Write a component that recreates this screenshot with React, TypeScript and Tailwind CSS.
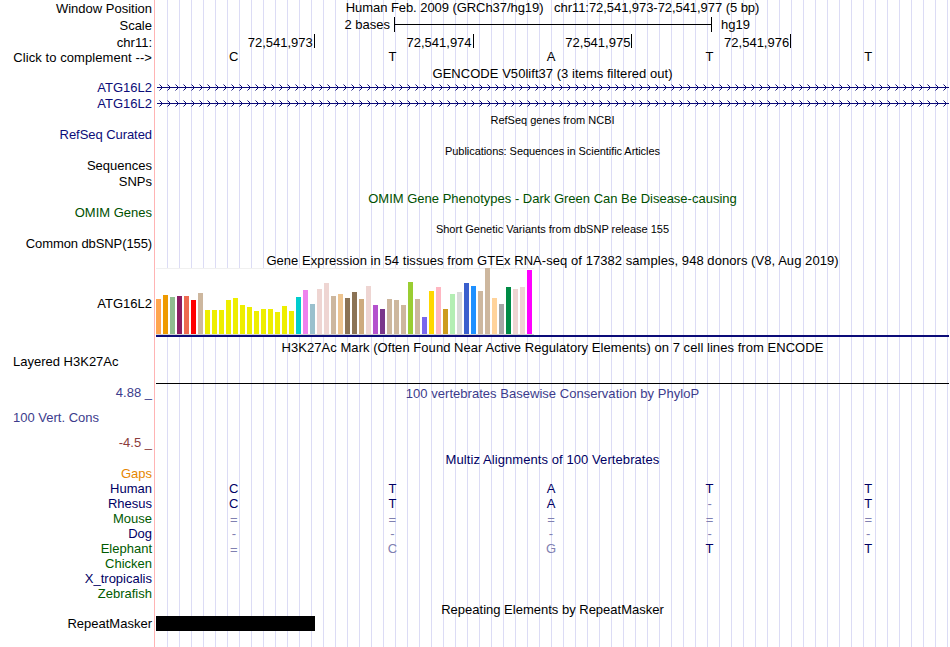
import clsx from "clsx";

const BASES = ["C", "T", "A", "T", "T"];
const POSITIONS = ["72,541,973", "72,541,974", "72,541,975", "72,541,976"];

const GUIDES = Array.from({ length: 66 }, (_, i) => 167 + i * 12);
const CHEVRONS = Array.from({ length: 99 }, (_, i) => 3 + i * 8);

// median expression per tissue, in pixels
const TISSUES: [number, string][] = [
  [35, "#ffa54f"],
  [39, "#ee9a00"],
  [37, "#8fbc8f"],
  [38, "#8b1c62"],
  [38, "#ee6a50"],
  [34, "#ff0000"],
  [41, "#cdb79e"],
  [24, "#eeee00"],
  [24, "#eeee00"],
  [24, "#eeee00"],
  [34, "#eeee00"],
  [36, "#eeee00"],
  [29, "#eeee00"],
  [27, "#eeee00"],
  [23, "#eeee00"],
  [25, "#eeee00"],
  [25, "#eeee00"],
  [22, "#eeee00"],
  [28, "#eeee00"],
  [23, "#eeee00"],
  [37, "#00cdcd"],
  [44, "#ee82ee"],
  [30, "#9ac0cd"],
  [45, "#eed5d2"],
  [51, "#eed5d2"],
  [38, "#cdb79e"],
  [40, "#eec591"],
  [36, "#8b7355"],
  [42, "#8b7355"],
  [35, "#cdaa7d"],
  [48, "#eed5d2"],
  [29, "#b452cd"],
  [25, "#7a378b"],
  [35, "#cdb79e"],
  [34, "#cdb79e"],
  [29, "#cdb79e"],
  [52, "#9acd32"],
  [35, "#cdb79e"],
  [17, "#7a67ee"],
  [43, "#ffd700"],
  [47, "#ffb6c1"],
  [25, "#cd9b1d"],
  [40, "#b4eeb4"],
  [42, "#d9d9d9"],
  [51, "#3a5fcd"],
  [48, "#1e90ff"],
  [43, "#cdb79e"],
  [66, "#cdb79e"],
  [36, "#ffd39b"],
  [30, "#a6a6a6"],
  [47, "#008b45"],
  [45, "#eed5d2"],
  [47, "#eed5d2"],
  [64, "#ff00ff"],
];

const SPECIES = [
  { name: "Gaps", color: "text-[#e68600]", bases: "" },
  { name: "Human", color: "text-[#000064]", bases: "CTATT" },
  { name: "Rhesus", color: "text-[#000064]", bases: "CTA-T" },
  { name: "Mouse", color: "text-[#005a00]", bases: "=====" },
  { name: "Dog", color: "text-[#000064]", bases: "-----" },
  { name: "Elephant", color: "text-[#005a00]", bases: "=CGTT" },
  { name: "Chicken", color: "text-[#005a00]", bases: "" },
  { name: "X_tropicalis", color: "text-[#000064]", bases: "" },
  { name: "Zebrafish", color: "text-[#005a00]", bases: "" },
];

interface RowProps {
  label?: string;
  height?: string;
  color?: string;
  align?: string;
  labelClass?: string;
  children?: React.ReactNode;
}

function Row({ label, height = "h-[15px]", color, align = "pr-1 text-right", labelClass, children }: RowProps) {
  return (
    <div className={clsx("flex", height, color)}>
      <div className={clsx("w-[156px] shrink-0", align, labelClass)}>{label}</div>
      <div className="w-[793px]">{children}</div>
    </div>
  );
}

interface TitleProps {
  text: string;
  height?: string;
  color?: string;
  className?: string;
}

function Title({ text, height, color, className }: TitleProps) {
  return (
    <Row height={height} color={color}>
      <p className={clsx("text-center", className)}>{text}</p>
    </Row>
  );
}

function Transcript() {
  return (
    <Row label="ATG16L2" height="h-[16px]" color="text-[#0c0c78]">
      <svg width="793" height="16" shapeRendering="crispEdges" fill="#0c0c78">
        <rect x="1" y="7" width="792" height="1" />
        {CHEVRONS.map((x) => (
          <g key={x}>
            <path d={`M${x} 4h1v1h-1zM${x} 10h1v1h-1z`} opacity="0.5" />
            <path d={`M${x + 1} 5h1v1h-1zM${x + 2} 6h1v1h-1zM${x + 2} 8h1v1h-1zM${x + 1} 9h1v1h-1z`} />
          </g>
        ))}
      </svg>
    </Row>
  );
}

// mismatches against the reference base are drawn lighter
function BaseCells({ bases, reference }: { bases: string[]; reference?: string[] }) {
  return (
    <div className="grid grid-cols-5">
      {bases.map((base, i) => (
        <span key={i} className={clsx("-ml-[3px] text-center", reference && base !== reference[i] && "text-[#8080b1]", base === "=" && "pt-px")}>
          {base}
        </span>
      ))}
    </div>
  );
}

export default function App() {
  return (
    <div className="relative h-[647px] w-[950px] overflow-hidden bg-white font-['Liberation_Sans',Arial,sans-serif] text-[13px] leading-[15px] whitespace-pre text-black">
      <svg className="absolute inset-0" width="950" height="647" shapeRendering="crispEdges">
        <rect x="154" width="1" height="647" fill="#ffb4b4" />
        {GUIDES.map((x) => (
          <rect key={x} x={x} width="1" height="647" fill="#dcdcf5" />
        ))}
      </svg>

      <div className="relative">
        <Row label="Window Position" height="h-[17px]" labelClass="pt-px">
          <p className="text-center tracking-[-0.06px]">Human Feb. 2009 (GRCh37/hg19)   chr11:72,541,973-72,541,977 (5 bp)</p>
        </Row>
        <Row label="Scale" height="h-[18px]" labelClass="pt-px">
          <div className="flex">
            <span className="w-[238px] pr-1 text-right">2 bases</span>
            <svg width="318" height="15" shapeRendering="crispEdges">
              <path d="M0 0h1v15h-1zM317 0h1v15h-1zM0 7h318v1h-318z" />
            </svg>
            <span className="pl-[9px]">hg19</span>
          </div>
        </Row>
        <Row label="chr11:">
          <div className="grid w-[794px] grid-cols-5">
            {POSITIONS.map((pos) => (
              <div key={pos} className="flex justify-end gap-px">
                <span>{pos}</span>
                <span className="-mt-px h-[14px] w-px bg-black" />
              </div>
            ))}
          </div>
        </Row>
        <Row label="Click to complement -->" height="h-[16px]" labelClass="tracking-[0.08px]">
          <div className="-mt-px">
            <BaseCells bases={BASES} />
          </div>
        </Row>

        <Title text="GENCODE V50lift37 (3 items filtered out)" height="h-[14px]" className="tracking-[0.04px]" />
        <Transcript />
        <Transcript />

        <Title text="RefSeq genes from NCBI" className="pt-px text-[11px]" />
        <Row label="RefSeq Curated" height="h-[16px]" color="text-[#0c0c78]" labelClass="tracking-[-0.06px]" />

        <Title text="Publications: Sequences in Scientific Articles" className="pt-px text-[11px] tracking-[-0.06px]" />
        <Row label="Sequences" height="h-[16px]" />
        <Row label="SNPs" height="h-[16px]" />

        <Title text="OMIM Gene Phenotypes - Dark Green Can Be Disease-causing" color="text-[#005000]" className="pt-px" />
        <Row label="OMIM Genes" height="h-[16px]" color="text-[#005000]" />

        <Title text="Short Genetic Variants from dbSNP release 155" className="pt-px text-[11px]" />
        <Row label="Common dbSNP(155)" height="h-[16px]" labelClass="tracking-[-0.1px]" />

        <Title
          text="Gene Expression in 54 tissues from GTEx RNA-seq of 17382 samples, 948 donors (V8, Aug 2019)"
          height="h-[16px]"
          className="pt-px tracking-[0.055px]"
        />
        <Row label="ATG16L2" height="h-[69px]" labelClass="pt-[28px]">
          <svg width="793" height="69" shapeRendering="crispEdges">
            <rect width="378" height="67" fill="#fff" />
            <rect width="378" height="1" fill="#f0f0f0" />
            <rect y="66" width="378" height="1" fill="#d2d2d2" />
            {TISSUES.map(([value, fill], i) => (
              <rect key={i} x={i * 7} y={66 - value} width="5" height={value} fill={fill} />
            ))}
            <rect y="67" width="793" height="2" fill="#0c0c78" />
          </svg>
        </Row>

        <Row label="Layered H3K27Ac" height="h-[47px]" align="pl-[13px] text-left" labelClass="pt-[17px]">
          <div className="h-[47px] border-b border-black pt-[3px] text-center tracking-[0.05px]">
            H3K27Ac Mark (Often Found Near Active Regulatory Elements) on 7 cell lines from ENCODE
          </div>
        </Row>

        <Row label="4.88 _" height="h-[26px]" color="text-[#3c3c8c]" labelClass="pt-px">
          <p className="pt-[2px] text-center tracking-[0.03px]">100 vertebrates Basewise Conservation by PhyloP</p>
        </Row>
        <Row label="100 Vert. Cons" height="h-[25px]" color="text-[#3c3c8c]" align="pl-[13px] text-left" />
        <Row label="-4.5 _" height="h-[17px]" color="text-[#8c3c3c]" />

        <Title text="Multiz Alignments of 100 Vertebrates" height="h-[14px]" color="text-[#000064]" className="tracking-[0.08px]" />
        {SPECIES.map((s) => (
          <Row key={s.name} label={s.name} color={s.color}>
            <div className="text-[#000064]">
              <BaseCells bases={s.bases.split("")} reference={BASES} />
            </div>
          </Row>
        ))}

        <Title text="Repeating Elements by RepeatMasker" className="pt-px" />
        <Row label="RepeatMasker">
          <div className="h-[15px] w-[159px] bg-black" />
        </Row>
      </div>
    </div>
  );
}
